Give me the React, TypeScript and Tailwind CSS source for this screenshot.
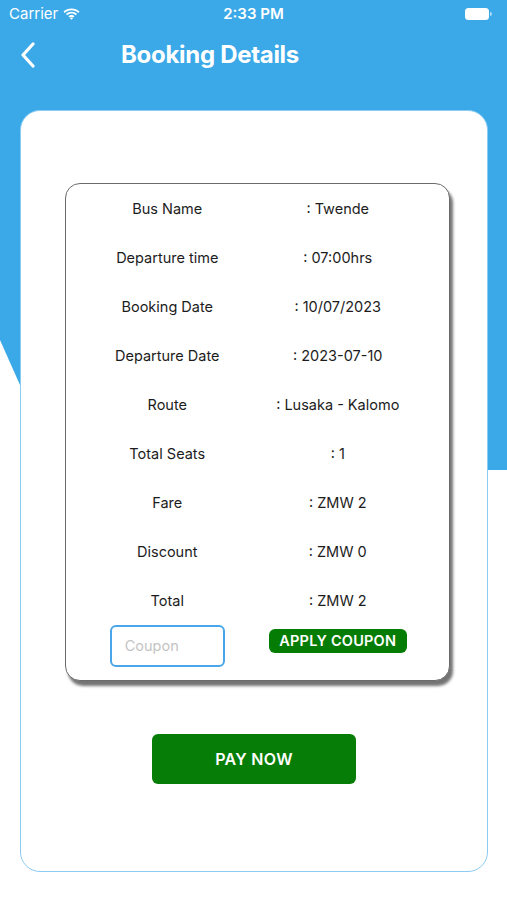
import React from "react";

const rows: [string, string][] = [
  ["Bus Name", ": Twende"],
  ["Departure time", ": 07:00hrs"],
  ["Booking Date", ": 10/07/2023"],
  ["Departure Date", ": 2023-07-10"],
  ["Route", ": Lusaka - Kalomo"],
  ["Total Seats", ": 1"],
  ["Fare", ": ZMW 2"],
  ["Discount", ": ZMW 0"],
  ["Total", ": ZMW 2"],
];

export default function App() {
  return (
    <div
      className="relative w-[507px] h-[900px] bg-white overflow-hidden"
      style={{ fontFamily: "Inter, 'Noto Sans', sans-serif" }}
    >
      <svg className="absolute left-0 top-0" width="507" height="900" viewBox="0 0 507 900">
        <path d="M0 0 H507 V470 H60 L20 385 L0 340 Z" fill="#3ba9e8" />
      </svg>

      <div className="relative">
        {/* status bar */}
        <div className="h-[28px] flex items-center justify-between px-[9px] text-white">
          <div className="flex items-center gap-[5px] w-[120px]">
            <span className="text-[15px]">Carrier</span>
            <svg width="17" height="12" viewBox="0 0 17 12">
              <path d="M8.5 2.2c2.6 0 5 1 6.8 2.7l1.2-1.3C14.4 1.6 11.6 0.4 8.5 0.4S2.6 1.6 0.5 3.6l1.2 1.3C3.5 3.2 5.9 2.2 8.5 2.2z" fill="white" />
              <path d="M8.5 5.6c1.6 0 3.1 0.6 4.3 1.7l1.2-1.3C12.5 4.6 10.6 3.8 8.5 3.8S4.5 4.6 3 6l1.2 1.3C5.4 6.2 6.9 5.6 8.5 5.6z" fill="white" />
              <path d="M8.5 8.9c0.7 0 1.3 0.3 1.8 0.7l1.2-1.3C10.7 7.6 9.6 7.1 8.5 7.1S6.3 7.6 5.5 8.3l1.2 1.3C7.2 9.2 7.8 8.9 8.5 8.9z M8.5 11.8l1.5-1.6c-0.4-0.4-0.9-0.6-1.5-0.6S7.4 9.8 7 10.2z" fill="white" />
            </svg>
          </div>
          <span className="text-[15px] font-semibold">2:33 PM</span>
          <div className="w-[120px] flex justify-end pr-[6px]">
            <div className="flex items-center">
              <div className="w-[24px] h-[12px] rounded-[3.5px] bg-white" />
              <div className="w-[1.5px] h-[4px] bg-white/60 ml-[1px] rounded-r" />
            </div>
          </div>
        </div>

        {/* header */}
        <div className="h-[54px] flex items-center">
          <svg className="ml-[20px]" width="16" height="26" viewBox="0 0 16 26">
            <path d="M13 2 L3 13 L13 24" stroke="white" strokeWidth="3.2" fill="none" strokeLinecap="round" strokeLinejoin="round" />
          </svg>
          <span className="ml-[85px] text-white text-[24px] font-bold tracking-[-0.3px]">Booking Details</span>
        </div>

        {/* main card */}
        <div className="mt-[28px] ml-[20px] w-[468px] h-[762px] bg-white rounded-[20px] border border-[#8ccbf2] pt-[72px]">
          <div className="ml-[44px] w-[385px] rounded-[15px] border border-[#6b6b6b] bg-white shadow-[3px_5px_3px_rgba(0,0,0,0.55)] pl-[16px] pr-[26px] pb-[13px]">
            {rows.map(([k, v]) => (
              <div key={k} className="grid grid-cols-2 h-[49px] items-center text-[14.5px] text-[#1c1c1c]">
                <span className="text-center">{k}</span>
                <span className="text-center">{v}</span>
              </div>
            ))}
            <div className="grid grid-cols-2 items-start">
              <div className="flex justify-center">
                <div className="w-[115px] h-[42px] rounded-[6px] border-2 border-[#49a6ea] flex items-center pl-[13px] text-[14.5px] text-[#c4c4c4]">
                  Coupon
                </div>
              </div>
              <div className="flex justify-center pt-[4px]">
                <div className="w-[138px] h-[24px] rounded-[6px] bg-[#057d05] text-white text-[14.5px] font-semibold flex items-center justify-center tracking-[0.2px]">
                  APPLY COUPON
                </div>
              </div>
            </div>
          </div>

          <div className="flex justify-center mt-[53px]">
            <div className="w-[204px] h-[50px] rounded-[6px] bg-[#067d06] text-white text-[16px] font-semibold flex items-center justify-center tracking-[0.3px]">
              PAY NOW
            </div>
          </div>
        </div>
      </div>
    </div>
  );
}
